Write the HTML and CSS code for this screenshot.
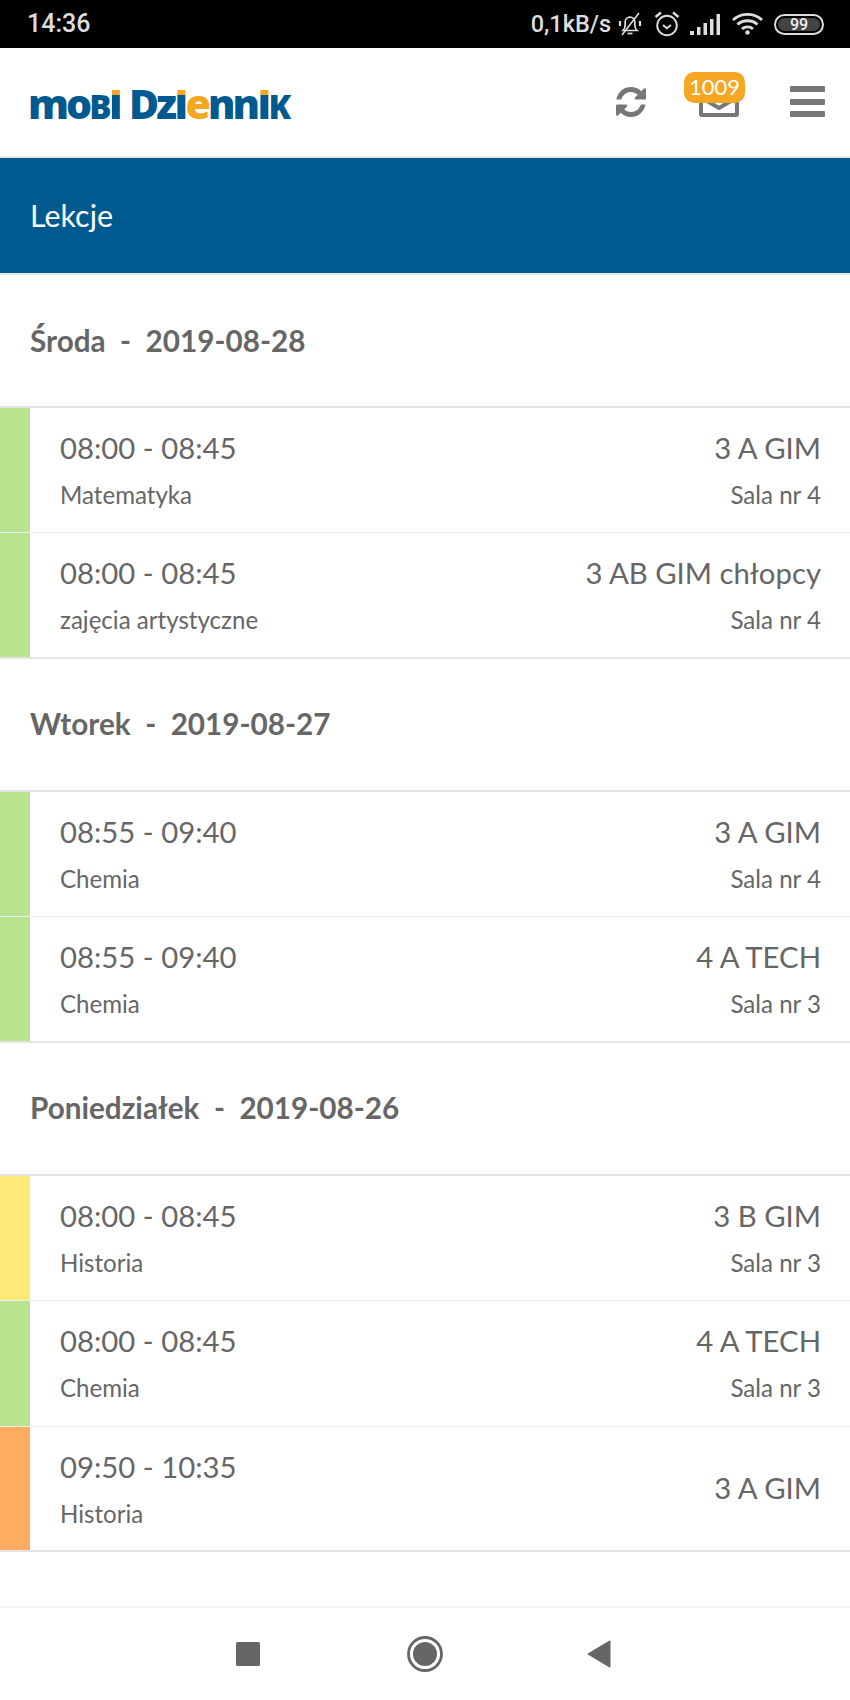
FILE: index.html
```html
<!DOCTYPE html>
<html lang="pl">
<head>
<meta charset="utf-8">
<title>mobiDziennik - Lekcje</title>
<link rel="stylesheet" href="styles.css">
</head>
<body>
<div class="screen">
  <div class="status">
    <span class="clock">14:36</span>
    <div class="status-right">
      <span class="speed">0,1kB/s</span>
      <svg class="ic-bell" viewBox="0 0 24 24" fill="none" stroke="#ddd" stroke-width="1.7"><path d="M5 18.500c1.600-1.600 2.200-3 2.200-5.500V10c0-2.800 2-4.800 4.800-4.800s4.800 2 4.800 4.800v3c0 2.500.6 3.900 2.200 5.500z"/><path d="M9.500 21.500h5"/><path d="M4 23L21 1" stroke-width="1.600"/><path d="M2 9v5M22 9v5" stroke-width="2.200"/></svg>
      <svg class="ic-alarm" viewBox="0 0 26 26" fill="none" stroke="#ddd" stroke-width="1.900"><circle cx="13" cy="14.500" r="9.800"/><path d="M9 14l3.800 3.200L17 14"/><path d="M1.500 6L7 1.500M24.500 6L19 1.500" stroke-width="2.400"/></svg>
      <svg class="ic-signal" viewBox="0 0 30 21" fill="#ddd"><rect x="0" y="17" width="4" height="4"/><rect x="7" y="13" width="3.500" height="8"/><rect x="13.500" y="9" width="3.500" height="12"/><rect x="20" y="5" width="3.500" height="16"/><rect x="26.500" y="0" width="3.500" height="21"/></svg>
      <svg class="ic-wifi" viewBox="0 0 31 22" fill="none" stroke="#ddd" stroke-width="2.800"><path d="M1 7C9-.5 22-.5 30 7"/><path d="M5.500 11.500C11 6.500 20 6.500 25.500 11.500"/><path d="M10 16c3-2.800 8-2.800 11 0"/><circle cx="15.500" cy="19.500" r="2.200" fill="#ddd" stroke="none"/></svg>
      <div class="battery"><span class="battery-fill">99</span></div>
    </div>
  </div>

  <header class="top">
    <div class="logo"><span>m</span><span>o</span><span class="sc">B</span><span class="tip">I</span><span class="gap"></span><span>D</span><span>z</span><span class="tip">I</span><span class="or">e</span><span>nn</span><span class="tip">I</span><span class="sc">K</span></div>
    <div class="actions">
      <svg class="ic-sync" viewBox="0 0 1536 1536" fill="#777"><path d="M1511 928q0 5-1 7-64 268-268 434.5t-478 166.5q-146 0-282.5-55t-243.5-157l-129 129q-19 19-45 19t-45-19-19-45v-448q0-26 19-45t45-19h448q26 0 45 19t19 45-19 45l-137 137q71 66 161 102t187 36q134 0 250-65t186-179q11-17 53-117 8-23 30-23h192q13 0 22.5 9.5t9.5 22.5zm25-800v448q0 26-19 45t-45 19h-448q-26 0-45-19t-19-45 19-45l138-138q-148-137-349-137-134 0-250 65t-186 179q-11 17-53 117-8 23-30 23h-199q-13 0-22.5-9.5t-9.5-22.5v-7q65-268 270-434.5t480-166.5q146 0 284 55.5t245 156.5l130-129q19-19 45-19t45 19 19 45z"/></svg>
      <div class="mail">
        <svg class="ic-mail" viewBox="0 0 40 40" fill="none" stroke="#777" stroke-width="4" stroke-linejoin="round"><path d="M2 14L20 2l18 12v23a1 1 0 0 1-1 1H3a1 1 0 0 1-1-1z"/><path d="M8 24l12 7 12-7"/></svg>
        <span class="badge">1009</span>
      </div>
      <div class="burger"><i></i><i></i><i></i></div>
    </div>
  </header>

  <div class="bar">Lekcje</div>

  <section class="day first">
    <h2 class="day-title">Środa&nbsp; -&nbsp; 2019-08-28</h2>
    <div class="row"><span class="strip green"></span><div class="cell"><div class="line"><span class="big">08:00 - 08:45</span><span class="big">3 A GIM</span></div><div class="line"><span class="small">Matematyka</span><span class="small">Sala nr 4</span></div></div></div>
    <div class="row last"><span class="strip green"></span><div class="cell"><div class="line"><span class="big">08:00 - 08:45</span><span class="big">3 AB GIM chłopcy</span></div><div class="line"><span class="small">zajęcia artystyczne</span><span class="small">Sala nr 4</span></div></div></div>
  </section>

  <section class="day">
    <h2 class="day-title">Wtorek&nbsp; -&nbsp; 2019-08-27</h2>
    <div class="row"><span class="strip green"></span><div class="cell"><div class="line"><span class="big">08:55 - 09:40</span><span class="big">3 A GIM</span></div><div class="line"><span class="small">Chemia</span><span class="small">Sala nr 4</span></div></div></div>
    <div class="row last"><span class="strip green"></span><div class="cell"><div class="line"><span class="big">08:55 - 09:40</span><span class="big">4 A TECH</span></div><div class="line"><span class="small">Chemia</span><span class="small">Sala nr 3</span></div></div></div>
  </section>

  <section class="day">
    <h2 class="day-title">Poniedziałek&nbsp; -&nbsp; 2019-08-26</h2>
    <div class="row"><span class="strip yellow"></span><div class="cell"><div class="line"><span class="big">08:00 - 08:45</span><span class="big">3 B GIM</span></div><div class="line"><span class="small">Historia</span><span class="small">Sala nr 3</span></div></div></div>
    <div class="row"><span class="strip green"></span><div class="cell"><div class="line"><span class="big">08:00 - 08:45</span><span class="big">4 A TECH</span></div><div class="line"><span class="small">Chemia</span><span class="small">Sala nr 3</span></div></div></div>
    <div class="row last"><span class="strip orange"></span><div class="cell split"><div class="stack"><span class="big">09:50 - 10:35</span><span class="small">Historia</span></div><span class="big">3 A GIM</span></div></div>
  </section>

  <nav class="nav">
    <svg class="nav-square" viewBox="0 0 24 24" fill="#666"><rect width="24" height="24" rx="1.500"/></svg>
    <svg class="nav-home" viewBox="0 0 36 36"><circle cx="18" cy="18" r="16.500" fill="none" stroke="#666" stroke-width="2.800"/><circle cx="18" cy="18" r="12" fill="#666"/></svg>
    <svg class="nav-back" viewBox="0 0 24 28" fill="#666"><path d="M0 14L22.500.500a1 1 0 0 1 1 .8v25.400a1 1 0 0 1-1 .8z"/></svg>
  </nav>
</div>
</body>
</html>
```
FILE: styles.css
```css
* { box-sizing: border-box; }
html, body { margin: 0; padding: 0; background: #fff; }
body { font-family: Lato, "Open Sans", sans-serif; color: #666; }
.screen { width: 850px; height: 1700px; display: flex; flex-direction: column; overflow: hidden; }

.status { height: 48px; flex: none; background: #000; color: #ddd; display: flex; align-items: center; justify-content: space-between; padding: 0 26px 0 27px; font-family: Roboto, sans-serif; font-weight: 500; }
.clock { font-size: 25px; line-height: 48px; }
.status-right { display: flex; align-items: center; }
.speed { font-size: 23.500px; margin-right: 7px; }
.ic-bell { width: 24px; height: 24px; margin-right: 12px; }
.ic-alarm { width: 26px; height: 26px; margin-right: 10px; }
.ic-signal { width: 30px; height: 21px; margin-right: 12px; }
.ic-wifi { width: 31px; height: 22px; margin-right: 11px; }
.battery { width: 50px; height: 21px; border: 2px solid #ddd; border-radius: 11px; padding: 2px; display: flex; }
.battery-fill { flex: 1; background: #444; border-radius: 7px; color: #eee; font-size: 16px; font-weight: 500; line-height: 13px; text-align: center; }

.top { height: 110px; flex: none; border-bottom: 2px solid #e6e6e6; display: flex; align-items: flex-start; justify-content: space-between; padding: 0 25px 0 28px; }
.logo { font-family: "Open Sans", sans-serif; font-weight: 800; font-size: 41px; line-height: 46px; margin-top: 32px; color: #005a8f; white-space: nowrap; display: flex; align-items: baseline; letter-spacing: -2.900px; }
.logo .sc { font-size: 33px; }
.logo .tip { background: linear-gradient(#f5a81f 0, #f5a81f 15px, #005a8f 15px); -webkit-background-clip: text; background-clip: text; color: transparent; }
.logo .or { color: #f5a81f; }
.logo .gap { width: 9px; }
.actions { display: flex; align-items: flex-start; }
.ic-sync { width: 30px; height: 30px; margin-top: 39px; margin-right: 53px; }
.mail { position: relative; width: 40px; height: 69px; margin-right: 51px; }
.ic-mail { position: absolute; left: 0; top: 29px; width: 40px; height: 40px; }
.badge { position: absolute; left: -15px; top: 24px; width: 61px; height: 31px; background: #f5a623; color: #fff; border-radius: 10px; font-size: 22px; line-height: 30px; text-align: center; }
.burger { width: 35px; margin-top: 38px; display: flex; flex-direction: column; gap: 6.500px; }
.burger i { display: block; height: 6px; background: #777; border-radius: 1px; }

.bar { height: 117px; flex: none; background: #005a8f; color: #fff; border-bottom: 2px solid #e6e6e6; font-size: 30.400px; line-height: 115px; padding-left: 30px; }

.day-title { margin: 0; height: 133.200px; border-bottom: 2px solid #e5e5e5; padding-left: 30px; font-size: 29.700px; font-weight: 700; line-height: 130px; color: #666; }
.first .day-title { height: 133px; line-height: 131px; }

.row { height: 125.400px; display: flex; border-bottom: 1px solid #eee; }
.row.last { border-bottom: 2px solid #e5e5e5; }
.strip { width: 30px; flex: none; }
.green { background: #b9e48f; }
.yellow { background: #ffe87a; }
.orange { background: #ffac63; }
.cell { flex: 1; padding: 20px 29px 0 30px; display: flex; flex-direction: column; }
.line { display: flex; justify-content: space-between; align-items: baseline; }
.big { font-size: 29.300px; line-height: 40px; }
.small { font-size: 24.100px; line-height: 34px; margin-top: 10px; }
.cell.split { flex-direction: row; justify-content: space-between; align-items: center; padding-top: 0; }
.stack { display: flex; flex-direction: column; padding-top: 20px; align-self: flex-start; }

.nav { margin-top: auto; height: 94px; flex: none; border-top: 2px solid #f2f2f2; padding-right: 3px; display: flex; align-items: center; justify-content: center; }
.nav-square { width: 24px; height: 24px; margin-right: 147px; }
.nav-home { width: 36px; height: 36px; }
.nav-back { width: 24px; height: 28px; margin-left: 144px; }
```
